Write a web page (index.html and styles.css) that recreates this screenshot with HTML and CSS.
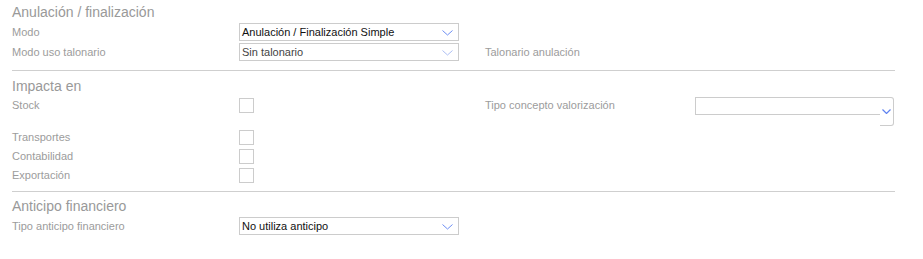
FILE: index.html
```html
<!DOCTYPE html>
<html lang="es">
<head>
  <meta charset="UTF-8" />
  <title>Tipo de comprobante</title>
  <link rel="stylesheet" href="styles.css">
</head>
<body>
  <div class="form">
    <div class="section first">
      <h3>Anulación / finalización</h3>
      <div class="row sel-row">
        <label>Modo</label>
        <div class="select">
          <span>Anulación / Finalización Simple</span>
          <svg class="arrow" width="11" height="6" viewBox="0 0 11 6"><polyline points="0.5,0.5 5.5,5 10.5,0.5" fill="none" stroke="#6d8ef3" stroke-width="1"/></svg>
        </div>
      </div>
      <div class="row sel-row">
        <label>Modo uso talonario</label>
        <div class="select disabled">
          <span>Sin talonario</span>
          <svg class="arrow" width="11" height="6" viewBox="0 0 11 6"><polyline points="0.5,0.5 5.5,5 10.5,0.5" fill="none" stroke="#adbff3" stroke-width="1"/></svg>
        </div>
        <label>Talonario anulación</label>
      </div>
    </div>

    <div class="section middle">
      <h3>Impacta en</h3>
      <div class="row chk-row tall">
        <label>Stock</label>
        <div><span class="check"></span></div>
        <label>Tipo concepto valorización</label>
        <div class="combo">
          <div class="combo-input"></div>
          <div class="combo-btn">
            <svg width="9" height="5" viewBox="0 0 9 5"><polyline points="0.5,0.5 4.5,4.5 8.5,0.5" fill="none" stroke="#5f82f0" stroke-width="1.2"/></svg>
          </div>
        </div>
      </div>
      <div class="row chk-row">
        <label>Transportes</label>
        <div><span class="check"></span></div>
      </div>
      <div class="row chk-row">
        <label>Contabilidad</label>
        <div><span class="check"></span></div>
      </div>
      <div class="row chk-row">
        <label>Exportación</label>
        <div><span class="check"></span></div>
      </div>
    </div>

    <div class="section last">
      <h3>Anticipo financiero</h3>
      <div class="row sel-row">
        <label>Tipo anticipo financiero</label>
        <div class="select">
          <span>No utiliza anticipo</span>
          <svg class="arrow" width="11" height="6" viewBox="0 0 11 6"><polyline points="0.5,0.5 5.5,5 10.5,0.5" fill="none" stroke="#6d8ef3" stroke-width="1"/></svg>
        </div>
      </div>
    </div>
  </div>
</body>
</html>
```

FILE: styles.css
```css
body { margin: 0; background: #fff; font-family: "Liberation Sans", Arial, sans-serif; color: #999; }
.form { width: 883px; margin-left: 12px; padding-top: 1px; }

.section { border-bottom: 1px solid #cfcfcf; }
.section.first { padding-bottom: 7px; }
.section.middle { padding-top: 4px; padding-bottom: 5px; }
.section.last { padding-top: 3px; border-bottom: none; }

h3 { margin: 0; height: 22px; line-height: 22px; font-size: 14px; font-weight: normal; color: #999; }

.row { display: grid; grid-template-columns: 227px 246px 210px 199px; align-items: start; }
.row label { font-size: 11px; line-height: 18px; color: #9c9c9c; }
.sel-row { height: 18px; margin-bottom: 2px; }
.chk-row { height: 19px; }
.chk-row.tall { height: 32px; }
.chk-row label { line-height: 16px; margin-top: 0; }

.select {
  width: 220px; height: 18px; box-sizing: border-box; border: 1px solid #ccc;
  display: flex; align-items: center; justify-content: space-between;
  padding: 0 5px 0 2px; font-size: 11px; color: #111; background: #fff;
}
.select.disabled { color: #444; }
.select .arrow { margin-top: 2px; }

.check { display: block; width: 15px; height: 15px; box-sizing: border-box; border: 1px solid #ccc; margin-top: 1px; }

.combo { display: flex; align-items: flex-start; }
.combo-input { width: 185px; height: 18px; box-sizing: border-box; border: 1px solid #ccc; border-right: none; }
.combo-btn {
  width: 14px; height: 29px; box-sizing: border-box; border: 1px solid #ccc; border-left: none;
  border-radius: 0 3px 3px 0; display: flex; justify-content: center; padding-top: 11px;
}
.combo-btn svg { display: block; }
```
